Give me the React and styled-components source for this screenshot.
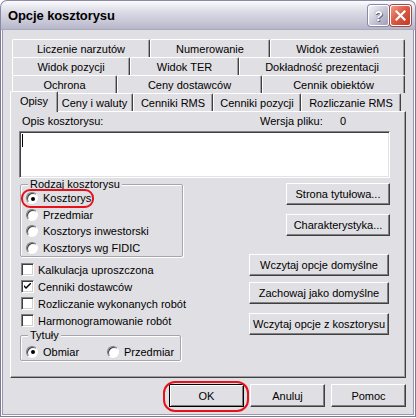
import React from 'react';
import styled, { createGlobalStyle } from 'styled-components';

const face = '#e0dfe3';
const font = '"Liberation Sans", Arial, sans-serif';

const GlobalStyle = createGlobalStyle`
  html, body {
    margin: 0;
    padding: 0;
    background: #fff;
  }
  body {
    font-family: ${font};
    font-size: 11px;
    color: #000;
  }
  * {
    box-sizing: border-box;
  }
`;

const Window = styled.div`
  width: 416px;
  height: 417px;
  display: flex;
  flex-direction: column;
`;

const TitleBar = styled.div`
  height: 30px;
  flex: none;
  display: flex;
  align-items: center;
  padding: 0 4px 0 7px;
  border: 1px solid #8a8aa6;
  border-bottom: none;
  border-radius: 7px 7px 0 0;
  background: linear-gradient(to bottom, #fdfdfe 0%, #ededf3 15%, #d9d9e4 40%, #c8c8d7 70%, #b7b7ca 95%, #a2a2b8 100%);
`;

const Title = styled.span`
  font-family: ${font};
  font-weight: bold;
  font-size: 13px;
  letter-spacing: -0.1px;
  color: #000;
`;

const TitleButtons = styled.div`
  margin-left: auto;
  display: flex;
  gap: 1px;
`;

const CaptionButton = styled.div`
  width: 21px;
  height: 21px;
  border: 1px solid #fff;
  border-radius: 3px;
  display: flex;
  align-items: center;
  justify-content: center;
  background: ${p => p.danger
    ? 'linear-gradient(135deg, #f09a88 0%, #dd5a44 45%, #c23a26 100%)'
    : 'linear-gradient(135deg, #f4f4fa 0%, #c9c9da 50%, #9c9cb6 100%)'};
  box-shadow: 0 0 0 1px ${p => (p.danger ? '#a04a4a' : '#8a8aa8')};
  font-family: ${font};
  font-weight: bold;
  font-size: 14px;
  color: #fff;
  text-shadow: 0 0 1px #4a4a66, 1px 1px 0 #6a6a88;
`;

const Frame = styled.div`
  flex: 1;
  display: flex;
  flex-direction: column;
  background: ${face};
  border: 1px solid #7b7b97;
  border-top: none;
  box-shadow:
    inset 1px 0 #fbfbfd, inset -1px 0 #fbfbfd, inset 0 -1px #fbfbfd,
    inset 2px 0 #9898b2, inset -2px 0 #9898b2, inset 0 -2px #9898b2;
  padding: 9px 9px 0 9px;
`;

const TabRow = styled.div`
  display: flex;
  align-items: flex-end;
  height: 18px;
  padding: 0 1px 0 2px;
  position: relative;
  z-index: ${p => (p.front ? 2 : 0)};
`;

const Tab = styled.div`
  width: ${p => p.w}px;
  height: ${p => (p.active ? 21 : 18)}px;
  margin: ${p => (p.active ? '0 -2px -1px -2px' : '0')};
  flex: none;
  display: flex;
  align-items: ${p => (p.active ? 'flex-start' : 'center')};
  padding-top: ${p => (p.active ? 3 : 0)}px;
  justify-content: center;
  background: ${face};
  border-top: 1px solid #fff;
  border-left: 1px solid #fff;
  border-right: 1px solid #404040;
  border-radius: 2px 2px 0 0;
  box-shadow: inset -1px 0 #a0a0a0;
  white-space: nowrap;
  position: relative;
  z-index: ${p => (p.active ? 1 : 0)};
`;

const Panel = styled.div`
  height: 267px;
  flex: none;
  border: 1px solid;
  border-color: #fff #404040 #404040 #fff;
  box-shadow: inset -1px -1px #a0a0a0;
  padding: 3px 15px 0 8px;
  display: flex;
  flex-direction: column;
`;

const HeaderRow = styled.div`
  display: flex;
  height: 13px;
  line-height: 13px;
`;

const HeaderLabel = styled.span`
  flex: 1;
  margin-left: 3px;
`;

const VersionLabel = styled.span`
  width: 80px;
`;

const VersionValue = styled.span`
  width: 50px;
`;

const Edit = styled.div`
  margin-top: 3px;
  height: 47px;
  background: #fff;
  border: 1px solid;
  border-color: #828282 #fff #fff #828282;
  box-shadow: inset 1px 1px #404040, inset -1px -1px #e3e3e3;
  padding: 2px 0 0 2px;
`;

const Caret = styled.div`
  width: 1px;
  height: 13px;
  background: #000;
`;

const Lower = styled.div`
  display: flex;
  justify-content: space-between;
`;

const LeftColumn = styled.div`
  width: 164px;
  margin-left: 1px;
  display: flex;
  flex-direction: column;
`;

const GroupBox = styled.fieldset`
  width: ${p => p.w}px;
  margin: 0;
  padding: ${p => p.pt || 0}px 4px 0 5px;
  border: 1px solid #a5a5aa;
  box-shadow: inset 1px 1px #fff, 1px 1px 0 #fff;
  border-radius: 2px;
  display: flex;
  flex-direction: ${p => (p.row ? 'row' : 'column')};
`;

const Legend = styled.legend`
  padding: 0 2px;
  margin-left: 2px;
  line-height: 12px;
  background: ${face};
`;

const RadioRow = styled.div`
  height: ${p => p.h || 16.5}px;
  width: ${p => (p.w ? `${p.w}px` : 'auto')};
  display: flex;
  align-items: center;
  gap: 5px;
  white-space: nowrap;
  position: relative;
`;

const RadioDot = styled.span`
  width: 12px;
  height: 12px;
  flex: none;
  border-radius: 50%;
  background: #fff;
  border: 1px solid;
  border-color: #808080 #fff #fff #808080;
  box-shadow: inset 1px 1px #404040, 0 0 0 0.5px #d8d8dc;
  display: flex;
  align-items: center;
  justify-content: center;

  &::after {
    content: '';
    display: ${p => (p.checked ? 'block' : 'none')};
    width: 4px;
    height: 4px;
    border-radius: 50%;
    background: #000;
    margin: 1px 0 0 1px;
  }
`;

const Highlight = styled.span`
  position: absolute;
  top: ${p => p.t}px;
  left: ${p => p.l}px;
  right: ${p => p.r}px;
  bottom: ${p => p.b}px;
  border: 2px solid #e8111a;
  border-radius: ${p => p.radius}px;
  pointer-events: none;
`;

const Checks = styled.div`
  margin-top: 4px;
  padding-left: 1px;
  display: flex;
  flex-direction: column;
`;

const CheckRow = styled.div`
  height: 17px;
  display: flex;
  align-items: center;
  gap: 4px;
  white-space: nowrap;
`;

const CheckBox = styled.span`
  width: 13px;
  height: 13px;
  flex: none;
  background: #fff;
  border: 1px solid;
  border-color: #808080 #fff #fff #808080;
  box-shadow: inset 1px 1px #404040, inset -1px -1px #d4d0c8;
  display: flex;
  align-items: center;
  justify-content: center;
`;

const RightColumn = styled.div`
  display: flex;
  flex-direction: column;
  align-items: flex-end;
`;

const Button = styled.div`
  width: ${p => p.w}px;
  height: ${p => p.h || 22}px;
  margin-top: ${p => p.mt || 0}px;
  margin-right: ${p => p.mr || 0}px;
  flex: none;
  display: flex;
  align-items: center;
  justify-content: center;
  background: ${face};
  border: 1px solid;
  border-color: ${p => (p.primary ? '#000' : '#fff #404040 #404040 #fff')};
  box-shadow: ${p => (p.primary
    ? 'inset 1px 1px #fff, inset -1px -1px #808080'
    : 'inset -1px -1px #808080')};
  white-space: nowrap;
  position: relative;
`;

const Footer = styled.div`
  margin-top: 6px;
  display: flex;
  justify-content: flex-end;
  gap: 6px;
`;

const tabRows = [
  [['Liczenie narzutów', 138], ['Numerowanie', 120], ['Widok zestawień', 135]],
  [['Widok pozycji', 118], ['Widok TER', 109], ['Dokładność prezentacji', 166]],
  [['Ochrona', 105], ['Ceny dostawców', 145], ['Cennik obiektów', 143]],
];

const frontRow = [['Opisy', 48], ['Ceny i waluty', 77], ['Cenniki RMS', 80], ['Cenniki pozycji', 88], ['Rozliczanie RMS', 100]];

const kinds = ['Kosztorys', 'Przedmiar', 'Kosztorys inwestorski', 'Kosztorys wg FIDIC'];

const checks = [
  ['Kalkulacja uproszczona', false],
  ['Cenniki dostawców', true],
  ['Rozliczanie wykonanych robót', false],
  ['Harmonogramowanie robót', false],
];

const CheckMark = () => (
  <svg width="7" height="7" viewBox="0 0 7 7">
    <path d="M0 2 L0 4 L2 6 L7 1 L7 -1 L2 4 Z" fill="#000" />
  </svg>
);

const CloseGlyph = () => (
  <svg width="11" height="11" viewBox="0 0 11 11">
    <path d="M1.5 1.5 L9.5 9.5 M9.5 1.5 L1.5 9.5" stroke="#fff" strokeWidth="2.2" strokeLinecap="square" />
  </svg>
);

export default function App() {
  return (
    <Window>
      <GlobalStyle />
      <TitleBar>
        <Title>Opcje kosztorysu</Title>
        <TitleButtons>
          <CaptionButton>?</CaptionButton>
          <CaptionButton danger><CloseGlyph /></CaptionButton>
        </TitleButtons>
      </TitleBar>

      <Frame>
        {tabRows.map((row, i) => (
          <TabRow key={i}>
            {row.map(([label, w]) => <Tab key={label} w={w}>{label}</Tab>)}
          </TabRow>
        ))}
        <TabRow front>
          {frontRow.map(([label, w], i) => (
            <Tab key={label} w={w} active={i === 0}>{label}</Tab>
          ))}
        </TabRow>

        <Panel>
          <HeaderRow>
            <HeaderLabel>Opis kosztorysu:</HeaderLabel>
            <VersionLabel>Wersja pliku:</VersionLabel>
            <VersionValue>0</VersionValue>
          </HeaderRow>
          <Edit><Caret /></Edit>

          <Lower>
            <LeftColumn>
              <GroupBox w={163}>
                <Legend>Rodzaj kosztorysu</Legend>
                {kinds.map((k, i) => (
                  <RadioRow key={k}>
                    <RadioDot checked={i === 0} />
                    {k}
                    {i === 0 && <Highlight t={-1} l={-5} r={84} b={-1} radius={9} />}
                  </RadioRow>
                ))}
              </GroupBox>

              <Checks>
                {checks.map(([label, on]) => (
                  <CheckRow key={label}>
                    <CheckBox>{on && <CheckMark />}</CheckBox>
                    {label}
                  </CheckRow>
                ))}
              </Checks>

              <GroupBox w={161} row pt={2}>
                <Legend>Tytuły</Legend>
                <RadioRow h={17} w={81}>
                  <RadioDot checked />
                  Obmiar
                </RadioRow>
                <RadioRow h={17}>
                  <RadioDot />
                  Przedmiar
                </RadioRow>
              </GroupBox>
            </LeftColumn>

            <RightColumn>
              <Button w={104} mt={5}>Strona tytułowa...</Button>
              <Button w={104} mt={9}>Charakterystyka...</Button>
              <Button w={140} mt={18} mr={1}>Wczytaj opcje domyślne</Button>
              <Button w={140} mt={6} mr={1}>Zachowaj jako domyślne</Button>
              <Button w={140} mt={9} mr={1}>Wczytaj opcje z kosztorysu</Button>
            </RightColumn>
          </Lower>
        </Panel>

        <Footer>
          <Button w={75} h={23} primary>
            OK
            <Highlight t={-4} l={-7} r={-6} b={-6} radius={12} />
          </Button>
          <Button w={75} h={23}>Anuluj</Button>
          <Button w={75} h={23}>Pomoc</Button>
        </Footer>
      </Frame>
    </Window>
  );
}
